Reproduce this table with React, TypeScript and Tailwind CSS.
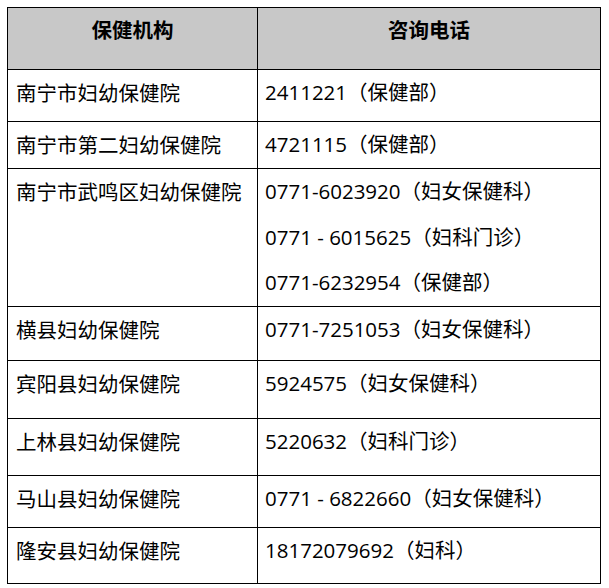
const ROWS: { name: string; phones: string[]; h: string }[] = [
  { name: '南宁市妇幼保健院', phones: ['2411221（保健部）'], h: 'h-[52px]' },
  { name: '南宁市第二妇幼保健院', phones: ['4721115（保健部）'], h: 'h-[47px]' },
  {
    name: '南宁市武鸣区妇幼保健院',
    phones: ['0771-6023920（妇女保健科）', '0771 - 6015625（妇科门诊）', '0771-6232954（保健部）'],
    h: 'h-[138px]',
  },
  { name: '横县妇幼保健院', phones: ['0771-7251053（妇女保健科）'], h: 'h-[54px]' },
  { name: '宾阳县妇幼保健院', phones: ['5924575（妇女保健科）'], h: 'h-[58px]' },
  { name: '上林县妇幼保健院', phones: ['5220632（妇科门诊）'], h: 'h-[57px]' },
  { name: '马山县妇幼保健院', phones: ['0771 - 6822660（妇女保健科）'], h: 'h-[52px]' },
  { name: '隆安县妇幼保健院', phones: ['18172079692（妇科）'], h: 'h-[56px]' },
]

const FONT = "font-['Open_Sans','Noto_Sans_CJK_SC',sans-serif]"

export default function App() {
  return (
    <div className={`min-h-[588px] w-[609px] bg-white pl-[7px] pt-[7px] text-black ${FONT}`}>
      <div className="grid w-[594px] grid-cols-[250px_343px] border-l border-t border-black text-[20.5px]">
        {/* Header */}
        <div className="h-[62px] border-b border-r border-black bg-[#c8c8c8] pt-[8px] text-center font-bold leading-[28px]">
          保健机构
        </div>
        <div className="h-[62px] border-b border-r border-black bg-[#c8c8c8] pt-[8px] text-center font-bold leading-[28px]">
          咨询电话
        </div>

        {/* Rows */}
        {ROWS.map((row) => (
          <div key={row.name} className="contents">
            <div className={`${row.h} border-b border-r border-black pl-[8px] leading-[46px] whitespace-nowrap`}>
              {row.name}
            </div>
            <div className={`${row.h} border-b border-r border-black pl-[7px] leading-[45.5px]`}>
              {row.phones.map((p) => (
                <div key={p} className="whitespace-nowrap">{p}</div>
              ))}
            </div>
          </div>
        ))}
      </div>
    </div>
  )
}
